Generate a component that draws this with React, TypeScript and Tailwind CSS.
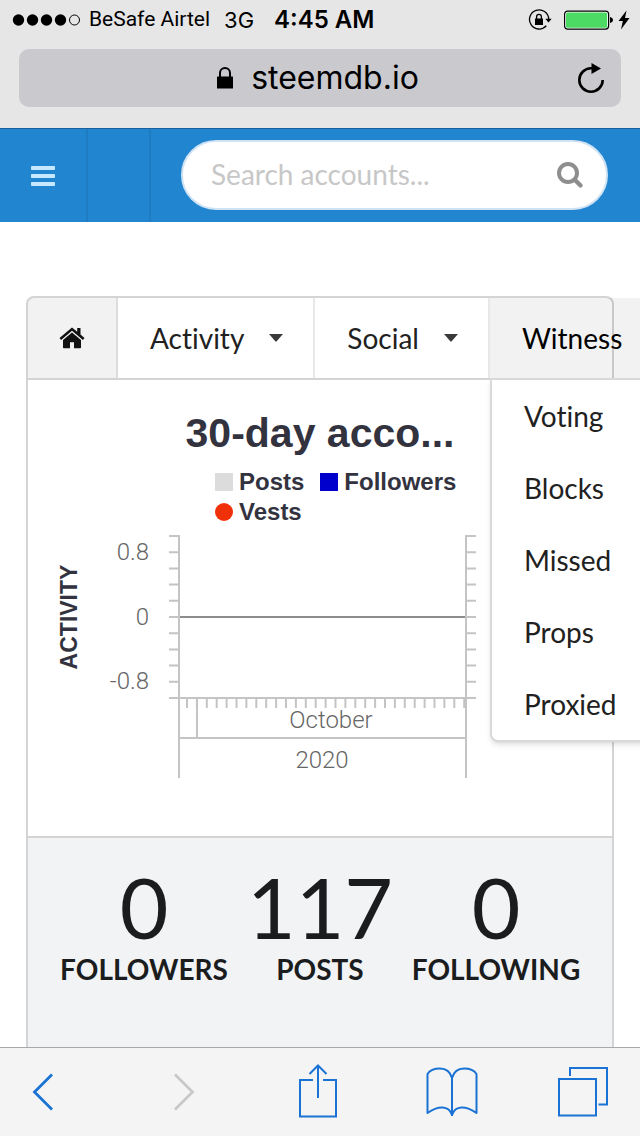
import React from 'react';

const witnessLinks = ['Voting', 'Blocks', 'Missed', 'Props', 'Proxied'];

const stats = [
  { label: 'Followers', value: 0 },
  { label: 'Posts', value: 117 },
  { label: 'Following', value: 0 },
];

const yTicks = Array.from({ length: 11 }, (_, i) => 8 + i * 16.2);
const xTicks = Array.from({ length: 29 }, (_, i) => 159 + i * 9.9);

function Caret() {
  return (
    <svg className="h-2 w-4" viewBox="0 0 16 8" fill="#3a3a3a">
      <path d="M1 0h14L8.7 7.3a1 1 0 0 1-1.4 0z" />
    </svg>
  );
}

function StatusBar() {
  return (
    <div className="flex h-10 items-center justify-between pl-3 pr-2.5 text-black">
      <div className="flex items-center">
        <svg className="h-3 w-[70px]" viewBox="0 0 70 12">
          {[6.5, 20.5, 34.5, 48.5].map((cx) => (
            <circle key={cx} cx={cx} cy="6" r="5.7" />
          ))}
          <circle cx="62.5" cy="6" r="5" fill="none" stroke="#000" strokeWidth="1" />
        </svg>
        <span className="ml-[7px] font-[Roboto,sans-serif] text-[21px]">BeSafe Airtel</span>
        <span className="ml-3.5 font-[Inter,sans-serif] text-[22px]">3G</span>
        <span className="ml-5 font-[Inter,sans-serif] text-2xl font-semibold">4:45 AM</span>
      </div>
      <div className="flex items-center">
        <svg className="h-6 w-6" viewBox="0 0 24 24">
          <path d="M18.3 17.8A9.6 9.6 0 1 1 20.7 11" fill="none" stroke="#000" strokeWidth="1.3" />
          <path d="M17.3 10.7h6.4l-3.2 3.8z" />
          <rect x="7" y="10.5" width="8" height="6.5" />
          <path d="M8.6 11V8.8a2.4 2.4 0 0 1 4.8 0V11" fill="none" stroke="#000" strokeWidth="1.3" />
        </svg>
        <svg className="ml-3 h-5 w-[50px]" viewBox="0 0 50 20">
          <rect x="0.6" y="1.1" width="44" height="18" rx="3" fill="#fff" stroke="#000" strokeWidth="1.2" />
          <rect x="2" y="2.5" width="41.2" height="15.2" rx="1.5" fill="#4cd964" />
          <path d="M46 7c2 .5 3 1.6 3 3s-1 2.5-3 3z" />
        </svg>
        <svg className="ml-1 h-5 w-3" viewBox="0 0 12 20">
          <path d="M8.5 0.5 0.5 11h4.3L3 19.5 11.5 8H7z" />
        </svg>
      </div>
    </div>
  );
}

function BrowserBar() {
  return (
    <header className="shrink-0 border-b border-[#1c5f9e] bg-[#e6e6e6]">
      <StatusBar />
      <div className="px-[19px] pb-[21px] pt-[9px]">
        <div className="flex h-[58px] items-center rounded-[10px] bg-[#c9c9ce] px-4">
          <div className="flex flex-1 items-center justify-center gap-[18px] pl-6">
            <svg className="h-[22px] w-4" viewBox="0 0 16 22">
              <rect x="0" y="9.5" width="16" height="12" rx="0.5" />
              <path d="M3 10V6a5 5 0 0 1 10 0v4" fill="none" stroke="#000" strokeWidth="2" />
            </svg>
            <span className="font-[Inter,sans-serif] text-[32px] leading-10 text-black">steemdb.io</span>
          </div>
          <button aria-label="Reload" className="w-7">
            <svg className="h-[30px] w-7" viewBox="0 0 28 30">
              <path d="M25.7 17A11.7 11.7 0 1 1 14 5.3h3" fill="none" stroke="#000" strokeWidth="2.6" />
              <path d="M14.5 0v11L24 5.5z" />
            </svg>
          </button>
        </div>
      </div>
    </header>
  );
}

function SiteNav() {
  return (
    <nav className="flex h-[93px] shrink-0 items-stretch bg-[#2185d0]">
      <button aria-label="Menu" className="flex w-[88px] shrink-0 items-center justify-center border-r-2 border-[#1f7bc2]">
        <svg className="h-5 w-6" viewBox="0 0 24 20" fill="#c7e9ff">
          <rect y="0" width="24" height="4" rx="0.8" />
          <rect y="8" width="24" height="4" rx="0.8" />
          <rect y="16" width="24" height="4" rx="0.8" />
        </svg>
      </button>
      <a href="#" aria-label="Home" className="w-[63px] shrink-0 border-r-2 border-[#1f7bc2]" />
      <form className="flex min-w-0 flex-1 items-center pb-0.5 pl-[30px] pr-8">
        <label className="flex h-[70px] w-full items-center rounded-full border-2 border-[#cfe3f4] bg-white pl-7 pr-[22px]">
          <input
            type="text"
            aria-label="Search accounts"
            placeholder="Search accounts..."
            className="min-w-0 flex-1 pb-0.5 text-[28px] outline-none placeholder:text-[#c7c7c7]"
          />
          <svg className="h-7 w-7" viewBox="0 0 28 28" fill="none" stroke="#8e8e8e">
            <circle cx="12" cy="12" r="9" strokeWidth="4" />
            <path d="m19 19 5.5 5.5" strokeWidth="4.4" strokeLinecap="round" />
          </svg>
        </label>
      </form>
    </nav>
  );
}

function AccountMenu() {
  return (
    <div className="relative z-10 flex h-[82px] items-stretch border-b-2 border-[#d4d4d5] text-[28px] text-[#212121] [font-variant-ligatures:none]">
      <a href="#" aria-label="Account" className="flex w-[90px] shrink-0 items-center justify-center rounded-tl-md border-r-2 border-[#dcdcdd] bg-black/5">
        <svg className="h-[22px] w-[26px]" viewBox="0 0 26 22" fill="#111">
          <path d="M13 0.500 0.500 11l1.600 1.900L13 3.800l10.900 9.100 1.600-1.900-4-3.400V1h-3.300v3.800z" />
          <path d="M13 5.400 4 12.900v7.300c0 .6.4 1 1 1h6v-6h4v6h6c.6 0 1-.4 1-1v-7.300z" />
        </svg>
      </a>
      <button className="flex shrink-0 items-center gap-6 border-r-2 border-[#e8e8e9] pl-8 pr-[29px]">
        Activity
        <Caret />
      </button>
      <button className="flex shrink-0 items-center gap-6 border-r-2 border-[#e8e8e9] pl-8 pr-[29px]">
        Social
        <Caret />
      </button>
      <div className="relative shrink-0">
        <button className="flex h-full w-[198px] items-center gap-6 bg-black/5 pl-8 text-black">
          Witness
          <Caret />
        </button>
        <div className="absolute left-0 top-full w-[198px] rounded-b-lg border-2 border-[#d9d9da] bg-white shadow-md">
          {witnessLinks.map((link) => (
            <a key={link} href="#" className="flex h-[72px] items-center pl-8">
              {link}
            </a>
          ))}
        </div>
      </div>
    </div>
  );
}

function ActivityChart() {
  return (
    <section className="h-[458px] border-b-2 border-[#d4d4d5] pt-7 font-['Liberation_Sans',sans-serif] text-[#333340]">
      <h2 className="text-center text-[41px] font-bold leading-[50px]">30-day acco...</h2>
      <div className="flex justify-center pl-8 pt-[9px]">
        <ul className="flex w-[242px] flex-wrap gap-x-4 text-2xl font-bold leading-[30px]">
          <li className="flex items-center gap-1.5">
            <span className="size-[18px] bg-[#dcdcdc]" />
            Posts
          </li>
          <li className="flex items-center gap-1.5">
            <span className="size-[18px] bg-[#0000cc]" />
            Followers
          </li>
          <li className="flex items-center gap-1.5">
            <span className="size-[18px] rounded-full bg-[#f03008]" />
            Vests
          </li>
        </ul>
      </div>
      <svg className="mt-px w-full" viewBox="0 0 584 260">
        <g stroke="#c4c4c4" strokeWidth="2">
          <path d="M151 7v243M438 7v243M141 170H448M151 210H438M169 170v40" />
          {yTicks.map((y) => (
            <path key={y} d={`M141 ${y}h10M438 ${y}h10`} />
          ))}
          {xTicks.map((x) => (
            <path key={x} d={`M${x} 170v10`} />
          ))}
        </g>
        <path d="M152 89H437" stroke="#8c8c8c" strokeWidth="2" />
        <g fill="#666" className="font-[Roboto,sans-serif] text-[24px] font-light">
          <text x="121" y="32" textAnchor="end">0.8</text>
          <text x="121" y="97" textAnchor="end">0</text>
          <text x="121" y="161" textAnchor="end">-0.8</text>
          <text x="303" y="200" textAnchor="middle">October</text>
          <text x="294" y="240" textAnchor="middle">2020</text>
        </g>
        <text transform="translate(49 89) rotate(-90)" textAnchor="middle" fill="#333340" className="text-[23px] font-bold">
          ACTIVITY
        </text>
      </svg>
    </section>
  );
}

function Toolbar() {
  return (
    <footer className="grid h-[89px] shrink-0 grid-cols-[117fr_134fr_134fr_134fr_121fr] items-center border-t border-[#a9a9ab] bg-[#f4f4f5] text-[#1a73d4]">
      <button aria-label="Back" className="pl-8">
        <svg className="h-10 w-6" viewBox="0 0 24 40" fill="none" stroke="currentColor" strokeWidth="2.8">
          <path d="M20 2.500 2.500 20 20 37.500" />
        </svg>
      </button>
      <button aria-label="Forward" className="flex justify-center text-[#c8c8c9]">
        <svg className="h-10 w-6" viewBox="0 0 24 40" fill="none" stroke="currentColor" strokeWidth="2.8">
          <path d="M3 2.500 20.500 20 3 37.500" />
        </svg>
      </button>
      <button aria-label="Share" className="flex justify-center">
        <svg className="h-14 w-10" viewBox="0 0 40 56" fill="none" stroke="currentColor" strokeWidth="2">
          <path d="M15 16H2v36.500h36V16H25M20 34V2M11.500 10 20 1.500 28.500 10" />
        </svg>
      </button>
      <button aria-label="Bookmarks" className="flex justify-center">
        <svg className="h-[52px] w-[52px]" viewBox="0 0 52 52" fill="none" stroke="currentColor" strokeWidth="2" strokeLinejoin="round">
          <path d="M26 50V12C24 5 19 2.500 14 2.500 9 2.500 4 4 1.500 8v39C12 39.500 23 39 26 49M26 12c2-7 7-9.500 12-9.500 5 0 10 1.500 12.500 5.500v39C40 39.500 29 39 26 49" />
        </svg>
      </button>
      <button aria-label="Tabs" className="flex justify-end pr-8">
        <svg className="h-[50px] w-[50px]" viewBox="0 0 50 50" fill="none" stroke="currentColor" strokeWidth="2">
          <path d="M1 12h37v36.500H1zM12 9V1h37v36.500h-8.500" />
        </svg>
      </button>
    </footer>
  );
}

export default function App() {
  return (
    <div className="flex h-screen flex-col overflow-hidden bg-white font-[Lato,sans-serif]">
      <BrowserBar />
      <SiteNav />
      <main className="flex min-h-0 flex-1 flex-col px-[26px] pt-[74px]">
        <div className="flex min-h-0 flex-1 flex-col rounded-t-lg border-2 border-b-0 border-[#d4d4d5]">
          <AccountMenu />
          <ActivityChart />
          <dl className="grid flex-1 grid-cols-3 content-start bg-[#f2f3f5] px-7 pt-[25px] text-center text-[#1b1c1d]">
            {stats.map((stat) => (
              <div key={stat.label} className="flex flex-col-reverse items-center">
                <dt className="text-[28px] font-bold uppercase leading-9">{stat.label}</dt>
                <dd className="text-[84px] leading-[88px]">{stat.value}</dd>
              </div>
            ))}
          </dl>
        </div>
      </main>
      <Toolbar />
    </div>
  );
}
